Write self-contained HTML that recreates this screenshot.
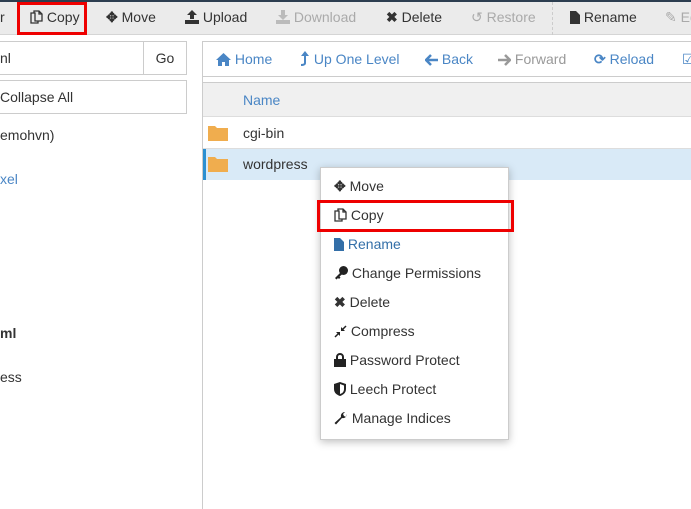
<!DOCTYPE html>
<html><head><meta charset="utf-8"><style>
*{box-sizing:border-box;margin:0;padding:0}
body{width:691px;height:509px;overflow:hidden;background:#fff;font-family:"Liberation Sans",sans-serif;font-size:14px;color:#333;position:relative}
.a{position:absolute;white-space:nowrap}
.tb{left:0;top:0;width:691px;height:35px;background:#ebebeb;border-top:2px solid #2c3e50;border-bottom:1px solid #d5d5d5}
.ti{top:9px;font-size:14px;color:#333}
.dis{color:#aaa}
.blue{color:#4a86c5}
svg{vertical-align:-2px}
.box{border:1px solid #ccc;background:#fff}
.mi{left:334px;font-size:14px;color:#333}
</style></head><body>
<div class="a tb"></div>
<div class="a ti" style="left:0">r</div>
<div class="a ti" style="left:30px"><svg width="13" height="14" viewBox="0 0 13 14"><path d="M1 3h3V1h5l3 3v7H8v2H1z M4 3h1v8h3 M9 1v3h3" fill="none" stroke="#333" stroke-width="1.3"/></svg> Copy</div>
<div class="a" style="left:17px;top:2px;width:70px;height:33px;border:3px solid #e00"></div>
<div class="a ti" style="left:106px"><span style="font-weight:bold">✥</span> Move</div>
<div class="a ti" style="left:185px"><svg width="14" height="14"><path d="M7 0l5 5H9v4H5V5H2z M0 10h14v4H0z" fill="#333"/></svg> Upload</div>
<div class="a ti dis" style="left:276px"><svg width="14" height="14"><path d="M5 0h4v5h3l-5 5-5-5h3z M0 10h14v4H0z" fill="#bbb"/></svg> Download</div>
<div class="a ti" style="left:386px"><b>✖</b> Delete</div>
<div class="a ti dis" style="left:471px">↺ Restore</div>
<div class="a" style="left:552px;top:2px;height:33px;border-left:1px dashed #ccc"></div>
<div class="a ti" style="left:570px"><svg width="10" height="13"><path d="M0 0h6l4 4v9H0z" fill="#333"/></svg> Rename</div>
<div class="a ti dis" style="left:665px">✎ Ed</div>

<div class="a box" style="left:-2px;top:41px;width:146px;height:34px"></div>
<div class="a" style="left:0;top:50px">nl</div>
<div class="a box" style="left:143px;top:41px;width:44px;height:34px;text-align:center;padding-top:8px">Go</div>
<div class="a box" style="left:-2px;top:80px;width:189px;height:34px"></div>
<div class="a" style="left:0;top:89px">Collapse All</div>
<div class="a" style="left:0;top:127px">emohvn)</div>
<div class="a blue" style="left:0;top:171px">xel</div>
<div class="a" style="left:0;top:325px;font-weight:bold">ml</div>
<div class="a" style="left:0;top:369px">ess</div>
<div class="a" style="left:202px;top:41px;height:468px;border-left:1px solid #ccc"></div>

<div class="a" style="left:202px;top:41px;width:495px;height:36px;border:1px solid #ccc;border-right:none"></div>
<div class="a blue" style="left:216px;top:51px"><svg width="15" height="13"><path d="M7.5 0L15 7h-2v6H9V9H6v4H2V7H0z" fill="#4a86c5"/></svg> Home</div>
<div class="a blue" style="left:300px;top:51px"><svg width="10" height="15"><path d="M5 0l4 5H6v7c0 2-2 3-5 3v-2c2 0 3-.5 3-1V5H1z" fill="#4a86c5"/></svg> Up One Level</div>
<div class="a blue" style="left:425px;top:51px"><svg width="13" height="12"><path d="M1 6h12M6 1L1 6l5 5" fill="none" stroke="#4a86c5" stroke-width="2.5"/></svg> Back</div>
<div class="a" style="left:498px;top:51px;color:#999"><svg width="13" height="12"><path d="M0 6h12M7 1l5 5-5 5" fill="none" stroke="#999" stroke-width="2.5"/></svg> Forward</div>
<div class="a blue" style="left:594px;top:51px"><b>⟳</b> Reload</div>
<div class="a blue" style="left:682px;top:51px">☑</div>

<div class="a" style="left:203px;top:82px;width:488px;height:35px;background:#f0f0f0;border-top:1px solid #ccc;border-bottom:1px solid #ddd"></div>
<div class="a blue" style="left:243px;top:92px">Name</div>
<div class="a" style="left:203px;top:117px;width:488px;height:32px;border-bottom:1px solid #ddd"></div>
<svg class="a" style="left:208px;top:125px" width="20" height="16"><path d="M0 1h7l2 2h11v13H0z" fill="#f0ad4e"/></svg>
<div class="a" style="left:243px;top:125px">cgi-bin</div>
<div class="a" style="left:203px;top:149px;width:488px;height:31px;background:#d9eaf7;border-left:3px solid #2a8fd1"></div>
<svg class="a" style="left:208px;top:156px" width="20" height="16"><path d="M0 1h7l2 2h11v13H0z" fill="#f0ad4e"/></svg>
<div class="a" style="left:243px;top:156px">wordpress</div>

<div class="a" style="left:320px;top:167px;width:189px;height:273px;background:#fff;border:1px solid #ccc;box-shadow:0 2px 8px rgba(0,0,0,.25)"></div>
<div class="a mi" style="top:178px"><b>✥</b> Move</div>
<div class="a mi" style="top:207px"><svg width="13" height="14" viewBox="0 0 13 14"><path d="M1 3h3V1h5l3 3v7H8v2H1z M4 3h1v8h3 M9 1v3h3" fill="none" stroke="#333" stroke-width="1.3"/></svg> Copy</div>
<div class="a" style="left:317px;top:200px;width:197px;height:32px;border:3px solid #e00"></div>
<div class="a mi" style="top:236px;color:#336fa8"><svg width="10" height="13"><path d="M0 0h6l4 4v9H0z" fill="#336fa8"/></svg> Rename</div>
<div class="a mi" style="top:265px"><svg width="14" height="14"><circle cx="9.5" cy="4.5" r="4.5" fill="#222"/><path d="M7 6L1 12l1.5 1.5L4 12l1 1 1.5-1.5-1-1L8.5 8z" fill="#222"/></svg> Change Permissions</div>
<div class="a mi" style="top:294px"><b>✖</b> Delete</div>
<div class="a mi" style="top:323px"><svg width="13" height="13"><path d="M12 1L8 5M1 12l4-4" stroke="#222" stroke-width="1.5"/><path d="M7 2v4h4z M2 7h4v4z" fill="#222"/></svg> Compress</div>
<div class="a mi" style="top:352px"><svg width="12" height="14"><rect x="0" y="6" width="12" height="8" fill="#222"/><path d="M3 7V4a3 3 0 0 1 6 0v3" fill="none" stroke="#222" stroke-width="2"/></svg> Password Protect</div>
<div class="a mi" style="top:381px"><svg width="12" height="14"><path d="M6 0l6 2v5c0 4-3 6-6 7C3 13 0 11 0 7V2z" fill="#222"/><path d="M6 2l4 1.5V7c0 3-2 4.5-4 5z" fill="#fff"/></svg> Leech Protect</div>
<div class="a mi" style="top:410px"><svg width="14" height="14"><path d="M13 3a4 4 0 0 1-5 4L2 13.5 0.5 12 7 6a4 4 0 0 1 4-5L9 3l1 2 2 1z" fill="#222"/></svg> Manage Indices</div>
</body></html>
